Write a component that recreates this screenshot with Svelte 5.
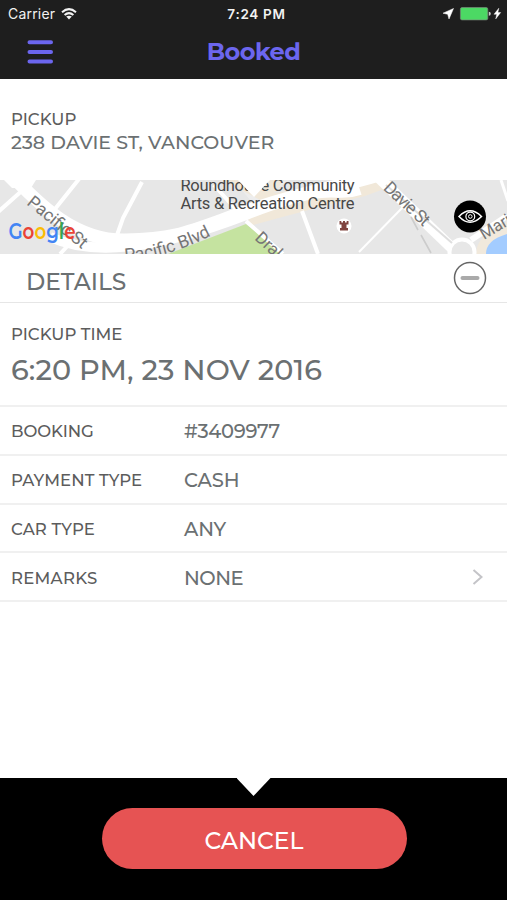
<script>
  const rows = [
    { label: 'BOOKING', value: '#3409977', ls: -0.1, vls: -0.3 },
    { label: 'PAYMENT TYPE', value: 'CASH', ls: 0.1, vls: -0.1 },
    { label: 'CAR TYPE', value: 'ANY', ls: 0.15, vls: -0.1 },
    { label: 'REMARKS', value: 'NONE', ls: 0.25, vls: -0.5, more: true }
  ];
</script>

<div class="screen">
  <header>
    <div class="status">
      <div class="left">
        <span class="carrier">Carrier</span>
        <svg width="16" height="12" viewBox="0 0 16 12" fill="none" stroke="#f2f2f2" stroke-width="2">
          <path d="M1 4.2Q8-2 15 4.2M3.6 7Q8 3.2 12.4 7" />
          <path d="M5.2 8.6Q8 6.8 10.8 8.6L8 11.6Z" fill="#f2f2f2" stroke="none" />
        </svg>
      </div>
      <span class="clock">7:24 PM</span>
      <div class="right">
        <svg width="60" height="14" viewBox="0 0 60 14">
          <path d="M11.5 1.5L7 12L5.7 7.3L1 6.2Z" fill="#fff" stroke="#fff" stroke-width=".5" />
          <rect x="18.4" y=".5" width="27.4" height="12.4" rx="1.6" fill="#4cd964" stroke="#78897b" stroke-width=".7" />
          <path d="M46.8 4.8Q48.8 5 48.8 6.8T46.8 8.8Z" fill="#ccc" />
          <path d="M56.8 1.2L52 7.3H54.7L53.7 12L58.7 5.5H55.9Z" fill="#fff" stroke="#fff" stroke-width=".4" />
        </svg>
      </div>
    </div>
    <div class="nav">
      <svg class="menu" width="28" height="26" viewBox="0 0 28 26" stroke="#6c66ee" stroke-width="4" stroke-linecap="round">
        <path d="M3.5 3.2H25M3.5 13H25M3.5 22.6H25" />
      </svg>
      <h1>Booked</h1>
    </div>
  </header>

  <section class="pickup">
    <div class="label pk">PICKUP</div>
    <div class="address">238 DAVIE ST, VANCOUVER</div>
  </section>

  <div class="map">
    <svg width="507" height="74" viewBox="0 180 507 74">
      <rect y="180" width="507" height="74" fill="#e7e7e7" />
      <path d="M160 180H290L270 193L255 206L237 184L220 180Z" fill="#ededed" />
      <path d="M222 180L284 180L274 193L385 180L392 186L365 196Q310 209 250 226L247 214L262 201Z" fill="#f1e8d9" />
      <path d="M168 254L246 224L284 254Z" fill="#c5e3a0" />
      <path d="M476 254Q476 235 507 222V254Z" fill="#f1e9dc" />
      <path d="M486 254Q486 240 507 234V254Z" fill="#a3ccff" />
      <g fill="none" stroke="#fff">
        <path d="M8 172C32 196 70 241 125 240S190 231 250 210S330 190 382 174" stroke-width="13" />
        <path d="M50 237C90 255 150 252 246 215S330 200 360 190" stroke-width="10" />
        <path d="M-2 212L25 188M55 209L79 179M116 238L123 218L142 182M60 254L74 239" stroke-width="4" />
        <path d="M246 221L283 254M302 211L318 254M214 185L240 214" stroke-width="4" />
        <path d="M359 252L403 207" stroke-width="2" />
        <path d="M376 175L453 249" stroke-width="11" />
        <path d="M471 240L507 216" stroke-width="6" />
        <path d="M501 180L508 201" stroke-width="3" />
        <circle cx="462" cy="252" r="12.5" stroke-width="4" fill="#e7e7e7" />
      </g>
      <path d="M386 185L452 243" stroke="#dedede" stroke-width="2" />
      <path d="M411 217L418 230M421 235L431 253" stroke="#ccc" stroke-width="1.6" />
      <path d="M4 180H36L31 188H12Z" fill="#fff" />
      <path id="blvd" d="M125 261Q170 258 216 233" fill="none" />
      <g class="street">
        <text transform="translate(26 204) rotate(39)" font-size="17.5" textLength="72">Pacific St</text>
        <text font-size="17.5"><textPath href="#blvd">Pacific Blvd</textPath></text>
        <text transform="translate(254 239) rotate(43)" font-size="17">Drake</text>
        <text transform="translate(382.5 189) rotate(43)" font-size="17.5" textLength="56">Davie St</text>
        <text transform="translate(484 240) rotate(-31)" font-size="16.5">Marina</text>
      </g>
      <g class="place">
        <text x="180.5" y="190.5" textLength="174">Roundhouse Community</text>
        <text x="180.5" y="208.5" textLength="174">Arts &amp; Recreation Centre</text>
      </g>
      <path d="M237 179H271L254 197Z" fill="#fff" />
      <circle cx="344" cy="226" r="7.5" fill="#fff" />
      <path d="M339.5 221H341.3V222.4H343V221H345V222.4H346.7V221H348.5V224.5H346.5V228H348V230.5H340V228H341.5V224.5H339.5Z" fill="#80443f" />
      <text class="google" x="8.5" y="239" textLength="67" lengthAdjust="spacingAndGlyphs"><tspan fill="#4285f4">G</tspan><tspan fill="#ea4335">o</tspan><tspan fill="#fbbc05">o</tspan><tspan fill="#4285f4">g</tspan><tspan fill="#34a853">l</tspan><tspan fill="#ea4335">e</tspan></text>
      <circle cx="470" cy="216.5" r="16" fill="#000" />
      <g fill="none" stroke="#fff">
        <path d="M459 216.5Q470 205 481.5 216.5Q470 228 459 216.5Z" stroke-width="1.5" />
        <circle cx="470.3" cy="216.5" r="4.4" stroke-width="1.2" />
        <circle cx="470.3" cy="216.5" r="1.8" stroke-width="1" />
      </g>
    </svg>
  </div>

  <div class="details">
    <h2>DETAILS</h2>
    <svg width="34" height="34" viewBox="0 0 34 34" fill="none">
      <circle cx="17" cy="17" r="15.5" stroke="#666" stroke-width="1.5" />
      <path d="M9.5 17H24.5" stroke="#aaa" stroke-width="4" stroke-linecap="round" />
    </svg>
  </div>

  <section class="time">
    <div class="label">PICKUP TIME</div>
    <div class="when">6:20 PM, 23 NOV 2016</div>
  </section>

  {#each rows as row}
    <div class="row">
      <div class="label name"><span style="letter-spacing: {row.ls}px">{row.label}</span></div>
      <div class="value"><span style="letter-spacing: {row.vls}px">{row.value}</span></div>
      {#if row.more}
        <svg width="12" height="18" viewBox="0 0 12 18" fill="none" stroke="#c4c4c8" stroke-width="2">
          <path d="M2.5 2L10.5 9L2.5 16" />
        </svg>
      {/if}
    </div>
  {/each}

  <footer>
    <div class="notch"></div>
    <button>CANCEL</button>
  </footer>
</div>

<style>
  .screen {
    width: 507px;
    height: 900px;
    display: flex;
    flex-direction: column;
    overflow: hidden;
    background: #fff;
    color: #6b7072;
    font-family: Montserrat, Inter, sans-serif;
    font-weight: 500;
  }
  svg { display: block; flex: none; }
  h1, h2 { margin: 0; }
  header { height: 79px; background: #1e1e1e; flex: none; }
  .status {
    height: 27px;
    display: grid;
    grid-template-columns: 1fr auto 1fr;
    align-items: center;
    color: #f2f2f2;
    font-family: Inter, sans-serif;
  }
  .left { display: flex; align-items: center; gap: 6px; padding-left: 8px; }
  .carrier { font-size: 14px; font-weight: 400; letter-spacing: 0.2px; }
  .clock { font-size: 13.5px; font-weight: 600; letter-spacing: 0.7px; padding-left: 6px; }
  .right { display: flex; justify-content: flex-end; padding-right: 5px; }
  .nav {
    height: 49px;
    display: grid;
    grid-template-columns: 1fr auto 1fr;
    align-items: center;
  }
  .menu { margin-left: 26px; }
  h1 { color: #6c66ee; font-size: 24px; line-height: 30px; font-weight: 700; letter-spacing: -0.5px; }
  .pickup { height: 72px; padding: 29px 11px 0; flex: none; }
  .label { color: #5c5c5c; font-size: 16.5px; line-height: 22px; white-space: nowrap; }
  .address { font-size: 19px; line-height: 26px; letter-spacing: 0.05px; white-space: nowrap; }
  .map { height: 74px; flex: none; }
  .street { font-family: Roboto, sans-serif; font-weight: 400; fill: #757575; }
  .place { font-family: Roboto, sans-serif; font-weight: 400; font-size: 16.5px; fill: #484848; }
  .google { font-family: Montserrat, "Open Sans", sans-serif; font-size: 22px; font-weight: 600; }
  .details {
    height: 48px;
    padding: 0 20px 0 26px;
    display: flex;
    align-items: center;
    justify-content: space-between;
    border-bottom: 1px solid #e6e6e6;
    flex: none;
  }
  h2 { font-size: 23.3px; font-weight: 500; padding-top: 7px; }
  .time { height: 82px; padding: 20px 11px 0; border-bottom: 2px solid #f0f0f0; flex: none; }
  .when { font-size: 28.7px; line-height: 36px; letter-spacing: 0.1px; padding-top: 7px; white-space: nowrap; }
  .row {
    height: 46.8px;
    display: flex;
    align-items: center;
    padding: 0 24px 0 11px;
    border-bottom: 2px solid #f0f0f0;
    flex: none;
  }
  .name { width: 173px; padding-top: 2px; }
  .value { flex: 1; font-size: 19.5px; padding-top: 2px; }
  footer {
    height: 122px;
    margin-top: auto;
    background: #000;
    display: flex;
    flex-direction: column;
    align-items: center;
    flex: none;
  }
  .notch { width: 34px; height: 18px; background: #fff; clip-path: polygon(0 0, 100% 0, 50% 100%); }
  button {
    width: 305px;
    height: 61px;
    margin: 12px 0 0 1px;
    border: 0;
    padding: 3px 0 0;
    border-radius: 31px;
    background: #e65353;
    color: #fff;
    font: 500 23.5px Montserrat, Inter, sans-serif;
  }
</style>
